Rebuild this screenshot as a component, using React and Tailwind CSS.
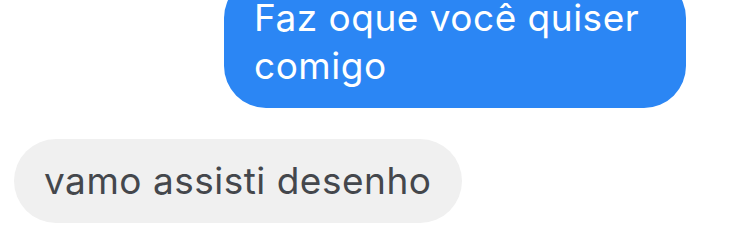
export default function App() {
  return (
    <div className="w-[734px] h-[244px] overflow-hidden bg-white flex flex-col" style={{ fontFamily: 'Inter, "Helvetica Neue", Arial, sans-serif' }}>
      <div className="flex justify-end pr-[48px] -mt-[24px]">
        <div className="w-[462px] rounded-[42px] bg-[#2b86f4] text-white text-[37px] tracking-[0.5px] leading-[48px] px-[30px] py-[18px]">
          Faz oque você quiser comigo
        </div>
      </div>
      <div className="flex pl-[14px] mt-[31px]">
        <div className="rounded-[42px] bg-[#f0f0f0] text-[#44474c] text-[37px] tracking-[0.5px] leading-[48px] pl-[30px] pr-[31px] py-[18px]">
          vamo assisti desenho
        </div>
      </div>
    </div>
  );
}
